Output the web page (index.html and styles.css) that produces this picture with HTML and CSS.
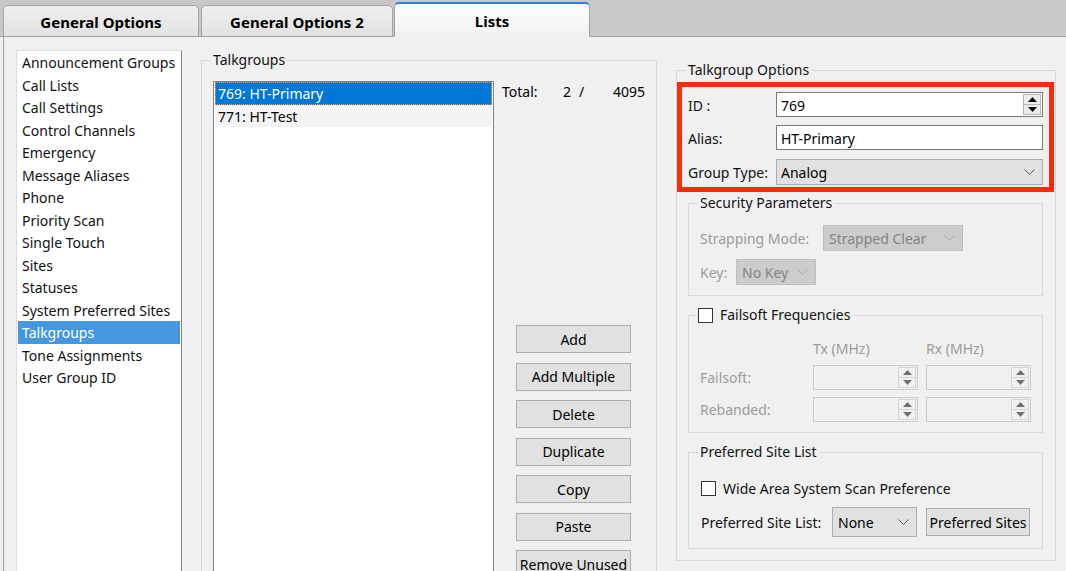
FILE: index.html
```html
<!DOCTYPE html>
<html>
<head>
<meta charset="utf-8">
<link rel="stylesheet" href="styles.css">
</head>
<body>
<div class="app">
  <div class="tabbar">
    <div class="tab">General Options</div>
    <div class="tab tab-2">General Options 2</div>
    <div class="tab active">Lists</div>
  </div>
  <div class="panel">
    <ul class="nav-list">
      <li>Announcement Groups</li>
      <li>Call Lists</li>
      <li>Call Settings</li>
      <li>Control Channels</li>
      <li>Emergency</li>
      <li>Message Aliases</li>
      <li>Phone</li>
      <li>Priority Scan</li>
      <li>Single Touch</li>
      <li>Sites</li>
      <li>Statuses</li>
      <li>System Preferred Sites</li>
      <li class="sel">Talkgroups</li>
      <li>Tone Assignments</li>
      <li>User Group ID</li>
    </ul>

    <fieldset class="group tg-group">
      <legend>Talkgroups</legend>
      <div class="tg-body">
        <div class="listbox">
          <div class="lb-item selected">769: HT-Primary</div>
          <div class="lb-item alt">771: HT-Test</div>
        </div>
        <div class="tg-side">
          <div class="total">
            <span class="total-label">Total:</span>
            <span class="total-count">2</span>
            <span class="total-slash">/</span>
            <span class="total-max">4095</span>
          </div>
          <div class="btn-col">
            <button class="btn">Add</button>
            <button class="btn">Add Multiple</button>
            <button class="btn">Delete</button>
            <button class="btn">Duplicate</button>
            <button class="btn">Copy</button>
            <button class="btn">Paste</button>
            <button class="btn">Remove Unused</button>
          </div>
        </div>
      </div>
    </fieldset>

    <fieldset class="group opt-group">
      <legend>Talkgroup Options</legend>
      <div class="highlight">
        <div class="form-row r1">
          <span class="lbl">ID :</span>
          <div class="input">
            <span class="val">769</span>
            <div class="spinner">
              <div class="spin-half"><svg width="9" height="5" viewBox="0 0 9 5"><polygon points="0,5 9,5 4.5,0" fill="#000"/></svg></div>
              <div class="spin-half"><svg width="9" height="5" viewBox="0 0 9 5"><polygon points="0,0 9,0 4.5,5" fill="#000"/></svg></div>
            </div>
          </div>
        </div>
        <div class="form-row r2">
          <span class="lbl">Alias:</span>
          <div class="input"><span class="val">HT-Primary</span></div>
        </div>
        <div class="form-row r3">
          <span class="lbl">Group Type:</span>
          <div class="select"><span class="val">Analog</span>
            <svg class="chev" width="11" height="6" viewBox="0 0 11 6"><polyline points="0.5,0.5 5.5,5.5 10.5,0.5" fill="none" stroke="#555" stroke-width="1"/></svg>
          </div>
        </div>
      </div>

      <fieldset class="group sub security">
        <legend>Security Parameters</legend>
        <div class="sec-row s1">
          <span class="dlbl strap-lbl">Strapping Mode:</span>
          <div class="select disabled strap-sel"><span class="val">Strapped Clear</span>
            <svg class="chev" width="11" height="6" viewBox="0 0 11 6"><polyline points="0.5,0.5 5.5,5.5 10.5,0.5" fill="none" stroke="#a8a8a8" stroke-width="1"/></svg>
          </div>
        </div>
        <div class="sec-row s2">
          <span class="dlbl key-lbl">Key:</span>
          <div class="select disabled key-sel"><span class="val">No Key</span>
            <svg class="chev" width="11" height="6" viewBox="0 0 11 6"><polyline points="0.5,0.5 5.5,5.5 10.5,0.5" fill="none" stroke="#a8a8a8" stroke-width="1"/></svg>
          </div>
        </div>
      </fieldset>

      <fieldset class="group sub failsoft">
        <legend class="check-legend"><span class="checkbox"></span><span class="check-text">Failsoft Frequencies</span></legend>
        <div class="fs-row fs-head">
          <span class="fs-lbl"></span>
          <span class="dlbl fs-col">Tx (MHz)</span>
          <span class="dlbl fs-col">Rx (MHz)</span>
        </div>
        <div class="fs-row fs-in">
          <span class="dlbl fs-lbl">Failsoft:</span>
          <div class="dinput"><div class="spinner dspin">
            <div class="spin-half"><svg width="9" height="5" viewBox="0 0 9 5"><polygon points="0,5 9,5 4.5,0" fill="#707070"/></svg></div>
            <div class="spin-half"><svg width="9" height="5" viewBox="0 0 9 5"><polygon points="0,0 9,0 4.5,5" fill="#707070"/></svg></div>
          </div></div>
          <div class="dinput"><div class="spinner dspin">
            <div class="spin-half"><svg width="9" height="5" viewBox="0 0 9 5"><polygon points="0,5 9,5 4.5,0" fill="#707070"/></svg></div>
            <div class="spin-half"><svg width="9" height="5" viewBox="0 0 9 5"><polygon points="0,0 9,0 4.5,5" fill="#707070"/></svg></div>
          </div></div>
        </div>
        <div class="fs-row fs-in">
          <span class="dlbl fs-lbl">Rebanded:</span>
          <div class="dinput"><div class="spinner dspin">
            <div class="spin-half"><svg width="9" height="5" viewBox="0 0 9 5"><polygon points="0,5 9,5 4.5,0" fill="#707070"/></svg></div>
            <div class="spin-half"><svg width="9" height="5" viewBox="0 0 9 5"><polygon points="0,0 9,0 4.5,5" fill="#707070"/></svg></div>
          </div></div>
          <div class="dinput"><div class="spinner dspin">
            <div class="spin-half"><svg width="9" height="5" viewBox="0 0 9 5"><polygon points="0,5 9,5 4.5,0" fill="#707070"/></svg></div>
            <div class="spin-half"><svg width="9" height="5" viewBox="0 0 9 5"><polygon points="0,0 9,0 4.5,5" fill="#707070"/></svg></div>
          </div></div>
        </div>
      </fieldset>

      <fieldset class="group sub preferred">
        <legend>Preferred Site List</legend>
        <div class="ps-row ps1">
          <span class="checkbox"></span><span class="check-text">Wide Area System Scan Preference</span>
        </div>
        <div class="ps-row ps2">
          <span class="ps-lbl">Preferred Site List:</span>
          <div class="select ps-sel"><span class="val">None</span>
            <svg class="chev" width="11" height="6" viewBox="0 0 11 6"><polyline points="0.5,0.5 5.5,5.5 10.5,0.5" fill="none" stroke="#555" stroke-width="1"/></svg>
          </div>
          <button class="btn ps-btn">Preferred Sites</button>
        </div>
      </fieldset>
    </fieldset>
  </div>
</div>
</body>
</html>
```

FILE: styles.css
```css
* { box-sizing: border-box; }

body {
  margin: 0;
  font-family: "Noto Sans", "Open Sans", sans-serif;
  font-size: 14px;
  color: #000;
  background: #f0f0f0;
  overflow: hidden;
}

.app {
  width: 1066px;
  height: 571px;
  overflow: hidden;
  background: #f0f0f0;
}

/* ---------- tabs ---------- */
.tabbar {
  height: 37px;
  background: #c8c8c8;
  border-bottom: 1px solid #a0a0a0;
  display: flex;
  align-items: flex-end;
  padding-left: 3px;
}

.tab {
  width: 196px;
  height: 32px;
  margin-bottom: -1px;
  border: 1px solid #a4a4a4;
  border-bottom: 1px solid #a0a0a0;
  border-radius: 5px 5px 0 0;
  background: linear-gradient(#efefef, #e1e1e1);
  font-weight: bold;
  font-size: 15px;
  display: flex;
  align-items: center;
  justify-content: center;
  margin-right: 2px;
  padding-top: 1px;
}

.tab-2 { width: 192px; margin-right: 1px; }

.tab.active {
  height: 35px;
  border-top: 2px solid #2f7fd8;
  border-bottom: 1px solid #f0f0f0;
  background: linear-gradient(#fdfdfd, #f6f6f6 60%, #f0f0f0);
  position: relative;
  padding-top: 1px;
}

/* ---------- panel ---------- */
.panel {
  margin-left: 3px;
  height: 534px;
  border-left: 1px solid #a0a0a0;
  padding: 13px 0 0 12px;
  display: flex;
  align-items: flex-start;
  overflow: hidden;
}

.nav-list {
  width: 166px;
  height: 540px;
  flex: none;
  margin: 0;
  padding: 0;
  list-style: none;
  background: #fff;
  border: 1px solid;
  border-color: #dcdcdc #828282 #828282 #dcdcdc;
}

.nav-list li {
  height: 22.5px;
  line-height: 20.5px;
  padding-top: 2px;
  margin: 0 1px;
  padding-left: 4px;
  white-space: nowrap;
  color: #111;
}

.nav-list li.sel {
  background: #4598de;
  color: #fff;
}

/* ---------- group boxes ---------- */
.group {
  margin: 0;
  padding: 0;
  border: 1px solid #d9d9d9;
  min-width: 0;
}

.group > legend {
  margin-left: 9px;
  padding: 0 2px;
  line-height: 20px;
  height: 20px;
  color: #111;
}

.tg-group {
  margin-left: 19px;
  width: 456px;
  height: 560px;
  flex: none;
}

.tg-body {
  display: flex;
  margin: 11px 0 0 11px;
}

.listbox {
  width: 281px;
  height: 500px;
  background: #fff;
  border: 1px solid #828282;
}

.lb-item {
  height: 22.5px;
  line-height: 20.5px;
  padding-top: 2px;
  margin: 0 1px;
  padding-left: 3px;
  white-space: nowrap;
}

.lb-item.selected {
  background: #0078d7;
  color: #fff;
  outline: 1px dotted #f5a040;
  outline-offset: -1px;
}

.lb-item.alt { background: #f3f3f3; }

.tg-side {
  margin-left: 8px;
  padding-top: 1px;
}

.total {
  display: flex;
  height: 20px;
  line-height: 20px;
  white-space: nowrap;
}

.total-label { width: 56px; }
.total-count { width: 13px; text-align: right; }
.total-slash { margin-left: 8px; width: 5px; }
.total-max { width: 61px; text-align: right; }

.btn-col {
  display: flex;
  flex-direction: column;
  margin: 223px 0 0 14px;
}

.btn {
  font: inherit;
  color: #000;
  background: #e1e1e1;
  border: 1px solid #adadad;
  padding: 0;
  margin: 0;
  width: 115px;
  height: 28px;
  margin-bottom: 9.5px;
  white-space: nowrap;
}

/* ---------- talkgroup options ---------- */
.opt-group {
  margin: 10px 0 0 19px;
  width: 380px;
  flex: none;
  padding-bottom: 11px;
}

.highlight {
  margin-top: 2px;
  width: 377px;
  border: 5px solid #ff2a0a;
  padding: 5px 5px 2px 6px;
}

.form-row {
  display: flex;
  align-items: center;
}

.form-row.r1, .form-row.r2 { height: 25px; margin-bottom: 8px; }
.form-row.r2 { margin-bottom: 9px; }
.form-row.r3 { height: 26px; }

.lbl { width: 88px; color: #111; padding-top: 1px; }

.input {
  width: 267px;
  height: 25px;
  background: #fff;
  border: 1px solid #7a7a7a;
  display: flex;
  align-items: center;
  justify-content: space-between;
  padding-left: 4px;
}

.input .val { padding-top: 1px; }

.val { white-space: nowrap; }

.spinner {
  width: 18px;
  height: 21px;
  margin-right: 1px;
  display: flex;
  flex-direction: column;
  border: 1px solid #b4b4b4;
  background: #ececec;
}

.spin-half {
  flex: 1;
  display: flex;
  align-items: center;
  justify-content: center;
}

.spin-half + .spin-half { border-top: 1px solid #b4b4b4; }

.select {
  width: 267px;
  height: 26px;
  background: #e1e1e1;
  border: 1px solid #adadad;
  display: flex;
  align-items: center;
  justify-content: space-between;
  padding: 0 7px 0 4px;
}

.select.disabled {
  background: #cccccc;
  border-color: #bfbfbf;
  color: #838383;
}

.chev { flex: none; }

/* sub groups */
.sub {
  margin-left: 11px;
  width: 355px;
}

.security { margin-top: 1px; padding-bottom: 10px; }

.dlbl { color: #9b9b9b; white-space: nowrap; }

.sec-row {
  display: flex;
  align-items: center;
  height: 26px;
  padding-left: 11px;
}

.sec-row.s1 { margin-top: 12px; }
.sec-row.s2 { margin-top: 8px; }

.strap-lbl { width: 123px; }
.strap-sel { width: 140px; padding-left: 5px; }
.key-lbl { width: 36px; }
.key-sel { width: 80px; padding-left: 5px; }

.failsoft { margin-top: 9px; padding-bottom: 10px; }

.group > legend.check-legend {
  display: flex;
  align-items: center;
  padding: 0 2px 0 0;
}

.checkbox {
  width: 15px;
  height: 15px;
  flex: none;
  background: #fff;
  border: 1px solid #333;
}

.check-text { margin-left: 7px; white-space: nowrap; color: #111; }

.fs-row {
  display: flex;
  align-items: center;
  padding-left: 11px;
}

.fs-head { margin-top: 13px; height: 20px; }
.fs-in { margin-top: 7px; height: 25px; }

.fs-lbl { width: 113px; }
.fs-col { width: 113px; }

.dinput {
  width: 105px;
  height: 25px;
  border: 1px solid #cccccc;
  background: #f0f0f0;
  display: flex;
  align-items: center;
  justify-content: flex-end;
  margin-right: 8px;
}

.dspin {
  border-color: #d4d4d4;
  background: #f0f0f0;
}

.dspin .spin-half + .spin-half { border-top-color: #d4d4d4; }

.preferred { margin-top: 9px; padding-bottom: 11px; }

.ps-row {
  display: flex;
  align-items: center;
  padding-left: 12px;
}

.ps1 { margin-top: 16px; height: 20px; }
.ps2 { margin-top: 9px; height: 30px; }

.ps-lbl { width: 131px; white-space: nowrap; color: #111; }

.ps-sel { width: 85px; height: 30px; padding: 0 7px 0 5px; margin-right: 9px; }

.ps-btn { width: 104px; margin-bottom: 0; }
```
